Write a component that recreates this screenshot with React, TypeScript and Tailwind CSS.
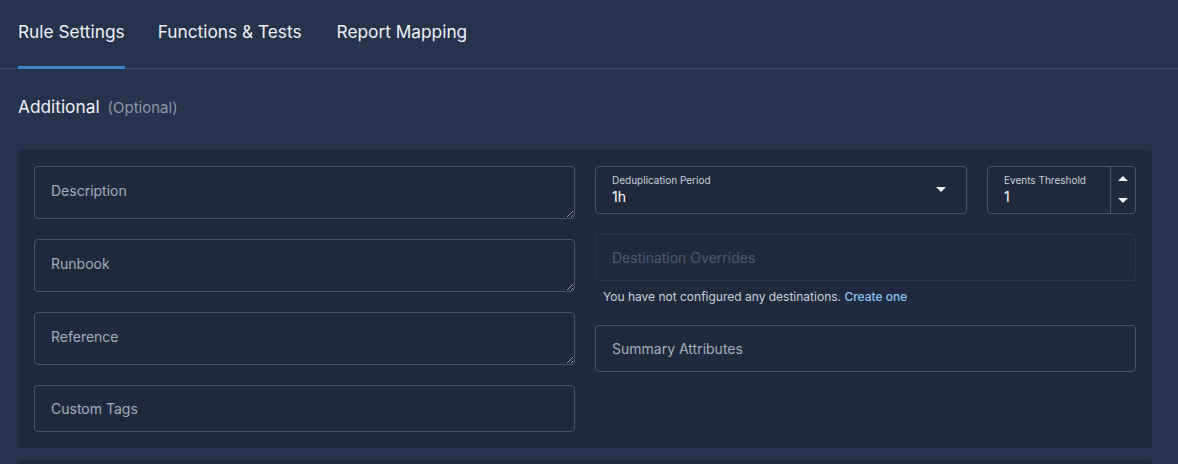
import React from 'react';

const font = { fontFamily: 'Inter, "Noto Sans", sans-serif' };

const TextArea: React.FC<{ placeholder: string }> = ({ placeholder }) => (
  <textarea
    placeholder={placeholder}
    className="block w-full h-[53px] bg-[#1f2a3e] border border-[#4a5670] rounded-[4px] px-4 pt-[13px] pb-[15px] text-[14px] text-gray-200 placeholder:text-[#a3adbd] outline-none"
  />
);

const Input: React.FC<{ placeholder: string; disabled?: boolean }> = ({ placeholder, disabled }) => (
  <div
    className={
      'h-[47px] rounded-[4px] border flex items-center px-4 text-[14px] ' +
      (disabled ? 'border-[#2a364c] text-[#4d5970]' : 'border-[#4a5670] text-[#a3adbd]')
    }
  >
    {placeholder}
  </div>
);

export default function App() {
  return (
    <div className="w-[1178px] h-[464px] overflow-hidden bg-[#26334d] text-white" style={font}>
      {/* tabs */}
      <div className="flex gap-[33px] pl-[18px] border-b border-[#415069] h-[69px] items-stretch">
        <div className="relative flex items-center text-[17.3px] text-[#eef1f6] pb-[4px]">
          Rule Settings
          <div className="absolute left-0 right-0 bottom-[-1px] h-[3px] bg-[#3b82c8]" />
        </div>
        <div className="flex items-center text-[17.3px] text-[#eef1f6] pb-[4px]">Functions &amp; Tests</div>
        <div className="flex items-center text-[17.3px] text-[#eef1f6] pb-[4px] ml-[2px]">Report Mapping</div>
      </div>

      <div className="px-[18px] pr-[26px]">
        <div className="flex items-baseline gap-2 h-[81px] pt-[25px]">
          <span className="text-[17.3px] text-[#eef1f6]">Additional</span>
          <span className="text-[15px] text-[#8e98aa]">(Optional)</span>
        </div>

        <div className="bg-[#1f2a3e] rounded-[4px] p-4 h-[298px] grid grid-cols-2 gap-5">
          <div className="flex flex-col gap-5">
            <TextArea placeholder="Description" />
            <TextArea placeholder="Runbook" />
            <TextArea placeholder="Reference" />
            <Input placeholder="Custom Tags" />
          </div>

          <div className="flex flex-col">
            <div className="flex gap-5">
              <div className="flex-1 h-[48px] rounded-[4px] border border-[#4a5670] flex items-center pl-4 pr-5">
                <div className="flex-1 flex flex-col leading-none pb-[2px]">
                  <span className="text-[10px] text-[#c9d0db]">Deduplication Period</span>
                  <span className="text-[14px] text-white mt-[5px]">1h</span>
                </div>
                <svg width="10" height="6" viewBox="0 0 10 6"><path d="M0 0h10L5 5z" fill="#eef1f6" /></svg>
              </div>
              <div className="w-[149px] h-[48px] rounded-[4px] border border-[#4a5670] flex">
                <div className="flex-1 flex flex-col justify-center pl-4 leading-none pb-[2px]">
                  <span className="text-[10px] text-[#c9d0db]">Events Threshold</span>
                  <span className="text-[14px] text-white mt-[5px]">1</span>
                </div>
                <div className="w-[25px] border-l border-[#4a5670] flex flex-col items-center justify-between py-[9px]">
                  <svg width="10" height="6" viewBox="0 0 10 6"><path d="M0 5h10L5 0z" fill="#eef1f6" /></svg>
                  <svg width="10" height="6" viewBox="0 0 10 6"><path d="M0 0h10L5 5z" fill="#eef1f6" /></svg>
                </div>
              </div>
            </div>

            <div className="mt-5">
              <Input placeholder="Destination Overrides" disabled />
            </div>
            <div className="text-[12px] text-[#c9d0db] pl-2 mt-[10px] leading-none">
              You have not configured any destinations.{' '}
              <span className="text-[#8cc4f2] font-medium">Create one</span>
            </div>
            <div className="mt-[22px]">
              <Input placeholder="Summary Attributes" />
            </div>
          </div>
        </div>

        <div className="bg-[#1f2a3e] rounded-[4px] h-[40px] mt-3" />
      </div>
    </div>
  );
}
